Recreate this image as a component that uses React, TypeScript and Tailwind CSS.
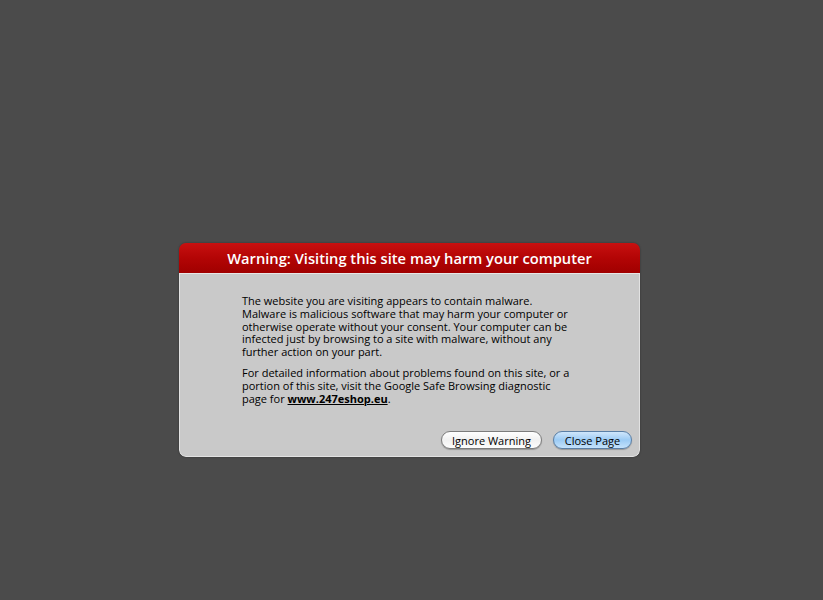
import React from 'react'

function Btn({ label, primary }: { label: string; primary?: boolean }) {
  return (
    <button
      className={`h-[18px] rounded-full border text-[11px] leading-none text-black shadow-[0_1px_1px_rgba(0,0,0,0.25)] ${
        primary
          ? 'border-[#5a7fa6] bg-gradient-to-b from-[#cfe6fb] via-[#9ccbf4] to-[#c4e2fb] w-[79px]'
          : 'border-[#7c7c7c] bg-gradient-to-b from-white via-[#f1f1f1] to-[#fdfdfd] w-[101px]'
      }`}
    >
      {label}
    </button>
  )
}

export default function App() {
  return (
    <div
      className="w-full h-[600px] bg-[#4b4b4b] pt-[243px] pl-[179px]"
      style={{ fontFamily: '"Open Sans", "DejaVu Sans", sans-serif' }}
    >
      <div className="w-[461px] h-[214px] rounded-[7px] overflow-hidden flex flex-col shadow-[0_0_2px_rgba(0,0,0,0.4)]">
        <div className="h-[31px] shrink-0 bg-gradient-to-b from-[#c81010] via-[#b30505] to-[#a00000] border-b border-[#e6e6e6] flex items-center justify-center">
          <span className="text-white text-[14.7px] font-semibold">
            Warning: Visiting this site may harm your computer
          </span>
        </div>
        <div className="flex-1 bg-[#c9c9c9] border-x border-b border-[#e2e2e2] rounded-b-[7px] flex flex-col">
          <div className="ml-[62px] mt-[21px] w-[330px] text-[11px] leading-[12.8px] text-black">
            <p>
              The website you are visiting appears to contain malware. Malware is malicious software that may harm
              your computer or otherwise operate without your consent. Your computer can be infected just by browsing
              to a site with malware, without any further action on your part.
            </p>
            <p className="mt-[8px]">
              For detailed information about problems found on this site, or a portion of this site, visit the Google
              Safe Browsing diagnostic page for <span className="font-bold underline">www.247eshop.eu</span>.
            </p>
          </div>
          <div className="mt-auto mb-[7px] pr-[7px] flex justify-end gap-[11px]">
            <Btn label="Ignore Warning" />
            <Btn label="Close Page" primary />
          </div>
        </div>
      </div>
    </div>
  )
}
